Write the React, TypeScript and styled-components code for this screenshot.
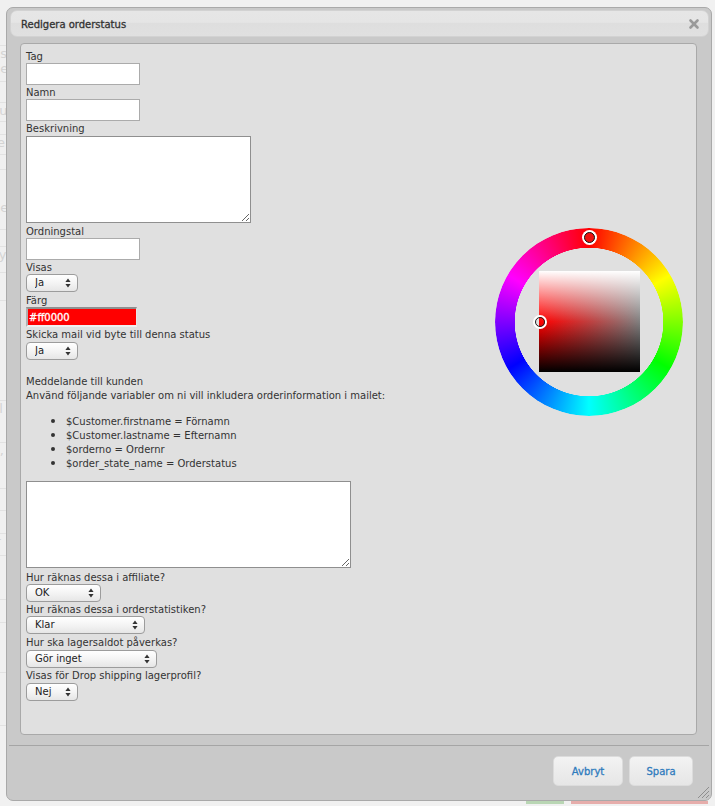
import React from 'react'
import styled, { createGlobalStyle } from 'styled-components'
import { X } from 'lucide-react'

const GlobalStyle = createGlobalStyle`
  html, body {
    margin: 0;
    padding: 0;
    background: #f1f1f1;
  }
  body {
    font-family: 'DejaVu Sans', 'Noto Sans', sans-serif;
    font-size: 10px;
    color: #333;
  }
`

const backdropRows = [
  { h: 46, t: '' },
  { h: 36, t: 'ns\nde' },
  { h: 21, t: '' },
  { h: 19, t: 'cu' },
  { h: 13, t: '' },
  { h: 20, t: 're' },
  { h: 15, t: '' },
  { h: 60, t: 'a\ne\nue' },
  { h: 17, t: 'a' },
  { h: 26, t: 'sy' },
  { h: 28, t: 'a' },
  { h: 100, t: '' },
  { h: 42, t: 'cl' },
  { h: 46, t: 'y,' },
  { h: 22, t: '' },
  { h: 23, t: 'o' },
  { h: 22, t: 'ir' },
  { h: 44, t: '' },
  { h: 23, t: 'e' },
  { h: 50, t: '' },
  { h: 53, t: '' },
]

function Field({ label, children, gap }: { label: string; children: React.ReactNode; gap?: number }) {
  return (
    <>
      <Label $gap={gap}>{label}</Label>
      {children}
    </>
  )
}

function Dropdown({ value, width, options }: { value: string; width: number; options?: string[] }) {
  const items = options || [value]
  return (
    <SelectWrap $width={width}>
      <Select defaultValue={value} aria-label={value}>
        {items.map((o) => (
          <option key={o}>{o}</option>
        ))}
      </Select>
      <SelectArrows width="6" height="10" viewBox="0 0 6 10">
        <path d="M3 0.5 L5.6 4 L0.4 4 Z M3 9.5 L5.6 6 L0.4 6 Z" fill="#333" />
      </SelectArrows>
    </SelectWrap>
  )
}

export default function App() {
  return (
    <>
      <GlobalStyle />
      <Backdrop>
        {backdropRows.map((r, i) => (
          <BackdropRow key={i} $height={r.h}>
            {r.t}
          </BackdropRow>
        ))}
      </Backdrop>
      <BottomBars>
        <BottomBar $color="#b9d6b4" $width={38} />
        <BottomBar $color="#e6adab" $width={137} />
      </BottomBars>
      <Page>
        <Dialog>
          <TitleBar>
            <Title>Redigera orderstatus</Title>
            <CloseIcon size={14} strokeWidth={4.5} />
          </TitleBar>
          <Body>
            <Panel>
              <FormColumn>
                <Field label="Tag">
                  <TextInput />
                </Field>
                <Field label="Namn">
                  <TextInput />
                </Field>
                <Field label="Beskrivning">
                  <TextArea $width={225} $top={1} />
                </Field>
                <Field label="Ordningstal" gap={1}>
                  <TextInput />
                </Field>
                <Field label="Visas">
                  <Dropdown value="Ja" width={52} options={['Ja', 'Nej']} />
                </Field>
                <Field label="Färg" gap={1}>
                  <ColorInput value="#ff0000" readOnly />
                </Field>
                <Field label="Skicka mail vid byte till denna status">
                  <Spaced>
                    <Dropdown value="Ja" width={52} options={['Ja', 'Nej']} />
                  </Spaced>
                </Field>
                <Message>
                  Meddelande till kunden
                  <br />
                  Använd följande variabler om ni vill inkludera orderinformation i mailet:
                </Message>
                <VarList>
                  <li>$Customer.firstname = Förnamn</li>
                  <li>$Customer.lastname = Efternamn</li>
                  <li>$orderno = Ordernr</li>
                  <li>$order_state_name = Orderstatus</li>
                </VarList>
                <TextArea $width={325} $top={11} />
                <Field label="Hur räknas dessa i affiliate?" gap={2}>
                  <Dropdown value="OK" width={75} />
                </Field>
                <Field label="Hur räknas dessa i orderstatistiken?">
                  <Dropdown value="Klar" width={119} />
                </Field>
                <Field label="Hur ska lagersaldot påverkas?" gap={1}>
                  <Spaced>
                    <Dropdown value="Gör inget" width={131} />
                  </Spaced>
                </Field>
                <Field label="Visas för Drop shipping lagerprofil?">
                  <Spaced>
                    <Dropdown value="Nej" width={52} options={['Ja', 'Nej']} />
                  </Spaced>
                </Field>
              </FormColumn>
              <Picker>
                <Wheel />
                <Square />
                <WheelMarker />
                <SquareMarker />
              </Picker>
            </Panel>
          </Body>
          <Footer>
            <Button>Avbryt</Button>
            <Button $narrow>Spara</Button>
          </Footer>
          <Grip width="12" height="12" viewBox="0 0 12 12">
            <path d="M1 12 L12 1 M5 12 L12 5 M9 12 L12 9" stroke="#8e8e8e" strokeWidth="1" />
          </Grip>
        </Dialog>
      </Page>
    </>
  )
}

const Backdrop = styled.div`
  position: absolute;
  inset: 0 0 auto 0;
  height: 806px;
  overflow: hidden;
  color: #d4d4d4;
  font-size: 13px;
`

const BackdropRow = styled.div<{ $height: number }>`
  box-sizing: border-box;
  height: ${(p) => p.$height}px;
  width: 100%;
  border-bottom: 1px solid #e2e2e2;
  background: #f0f0f0;
  overflow: hidden;
  line-height: 15px;
  white-space: pre-line;
  margin-left: -8px;
`

const BottomBars = styled.div`
  position: absolute;
  left: 526px;
  top: 801px;
  display: flex;
  gap: 7px;
`

const BottomBar = styled.div<{ $color: string; $width: number }>`
  width: ${(p) => p.$width}px;
  height: 3px;
  background: ${(p) => p.$color};
`

const Page = styled.div`
  position: relative;
  height: 806px;
  box-sizing: border-box;
  padding: 7px 3px 0 6px;
  overflow: hidden;
`

const Dialog = styled.div`
  position: relative;
  box-sizing: border-box;
  height: 794px;
  display: flex;
  flex-direction: column;
  padding: 2px;
  background: #c9c9c9;
  border: 1px solid #a9a9a9;
  border-radius: 7px;
`

const TitleBar = styled.div`
  box-sizing: border-box;
  height: 27px;
  margin: 0 0 0 1px;
  display: flex;
  align-items: center;
  justify-content: space-between;
  padding: 0 7px 0 10px;
  background: linear-gradient(#e6e6e6 0%, #e5e5e5 45%, #dedede 50%, #e0e0e0 100%);
  border: 1px solid #d2d2d2;
  border-radius: 7px;
`

const Title = styled.div`
  padding-top: 2px;
  font-size: 10px;
  color: #333;
  -webkit-text-stroke: 0.3px #333;
`

const CloseIcon = styled(X)`
  color: #9a9a9a;
`

const Body = styled.div`
  flex: none;
  display: flex;
  padding: 6px 12px 0 11px;
`

const Panel = styled.div`
  box-sizing: border-box;
  width: 677px;
  height: 692px;
  display: flex;
  justify-content: space-between;
  padding: 5px 0 0 5px;
  background: #e0e0e0;
  border: 1px solid #a9a9a9;
  border-radius: 4px;
`

const FormColumn = styled.div`
  display: flex;
  flex-direction: column;
  align-items: flex-start;
  width: 440px;
`

const Label = styled.label<{ $gap?: number }>`
  display: block;
  height: 14px;
  line-height: 16px;
  margin-top: ${(p) => p.$gap || 0}px;
  color: #333;
  white-space: nowrap;
`

const TextInput = styled.input`
  box-sizing: border-box;
  width: 114px;
  height: 22px;
  margin: 0;
  padding: 1px 3px;
  background: #fff;
  border: 1px solid #ababab;
  border-radius: 0;
  outline: none;
`

const TextArea = styled.textarea<{ $width: number; $top: number }>`
  display: block;
  box-sizing: border-box;
  width: ${(p) => p.$width}px;
  height: 87px;
  margin: ${(p) => p.$top}px 0 0;
  padding: 2px;
  background: #fff;
  border: 1px solid #8f8f8f;
  border-radius: 0;
  outline: none;
`

const SelectWrap = styled.div<{ $width: number }>`
  position: relative;
  width: ${(p) => p.$width}px;
  height: 18px;
`

const Select = styled.select`
  appearance: none;
  box-sizing: border-box;
  display: block;
  width: 100%;
  height: 18px;
  margin: 0;
  padding: 0 14px 2px 8px;
  font-family: inherit;
  font-size: 10px;
  color: #222;
  background: linear-gradient(#ffffff, #f4f4f4 50%, #e6e6e6);
  border: 1px solid #9c9c9c;
  border-radius: 4px;
  outline: none;
`

const SelectArrows = styled.svg`
  position: absolute;
  right: 7px;
  top: 4px;
  pointer-events: none;
`

const Spaced = styled.div`
  margin-top: 1px;
`

const ColorInput = styled.input`
  box-sizing: border-box;
  width: 111px;
  height: 20px;
  margin: 0;
  padding: 0 0 0 1px;
  font-family: inherit;
  font-size: 10px;
  color: #fff;
  -webkit-text-stroke: 0.3px #fff;
  background: #ff0000;
  border-style: solid;
  border-width: 2px 1px 2px 2px;
  border-color: #8f8f8f #e8e8e8 #f0f0f0 #b0b0b0;
  border-radius: 0;
  outline: none;
`

const Message = styled.p`
  margin: 15px 0 0;
  line-height: 14px;
  white-space: nowrap;
`

const VarList = styled.ul`
  margin: 11px 0 0;
  padding: 0 0 0 40px;
  line-height: 14px;
  white-space: nowrap;

  li {
    height: 14px;
  }

  li::marker {
    font-size: 13px;
  }
`

const Picker = styled.div`
  position: relative;
  flex: none;
  width: 188px;
  height: 188px;
  margin: 179px 13px 0 0;
`

const Wheel = styled.div`
  position: absolute;
  inset: 0;
  border-radius: 50%;
  background: conic-gradient(#f00, #ff0 60deg, #0f0 120deg, #0ff 180deg, #00f 240deg, #f0f 300deg, #f00);
  mask: radial-gradient(circle closest-side, transparent 74px, #000 74.5px);
`

const Square = styled.div`
  position: absolute;
  left: 44px;
  top: 43px;
  width: 101px;
  height: 101px;
  background: linear-gradient(#fff, rgba(255, 255, 255, 0) 50%, rgba(0, 0, 0, 0) 50%, #000),
    linear-gradient(to right, #f00, #808080);
`

const WheelMarker = styled.div`
  position: absolute;
  left: 89px;
  top: 4px;
  box-sizing: border-box;
  width: 11px;
  height: 11px;
  background: #ee1111;
  border: 1.5px solid #111;
  border-radius: 50%;
  box-shadow: 0 0 0 2px #fff;
`

const SquareMarker = styled.div`
  position: absolute;
  left: 40px;
  top: 89px;
  box-sizing: border-box;
  width: 10px;
  height: 10px;
  border: 1.5px solid #222;
  border-radius: 50%;
  box-shadow: 0 0 0 2px #fff;
`

const Footer = styled.div`
  flex: 1;
  display: flex;
  justify-content: flex-end;
  align-items: flex-start;
  gap: 6px;
  margin-top: 10px;
  padding: 10px 16px 0 0;
  border-top: 1px solid #a5a5a5;
`

const Button = styled.button<{ $narrow?: boolean }>`
  box-sizing: border-box;
  width: ${(p) => (p.$narrow ? 64 : 70)}px;
  height: 30px;
  padding: 0;
  font-family: inherit;
  font-size: 10px;
  color: #2f7bbd;
  -webkit-text-stroke: 0.3px #2f7bbd;
  background: linear-gradient(#f3f3f3, #e6e6e6);
  border: 1px solid #dcdcdc;
  border-radius: 5px;
`

const Grip = styled.svg`
  position: absolute;
  right: 2px;
  bottom: 2px;
`
